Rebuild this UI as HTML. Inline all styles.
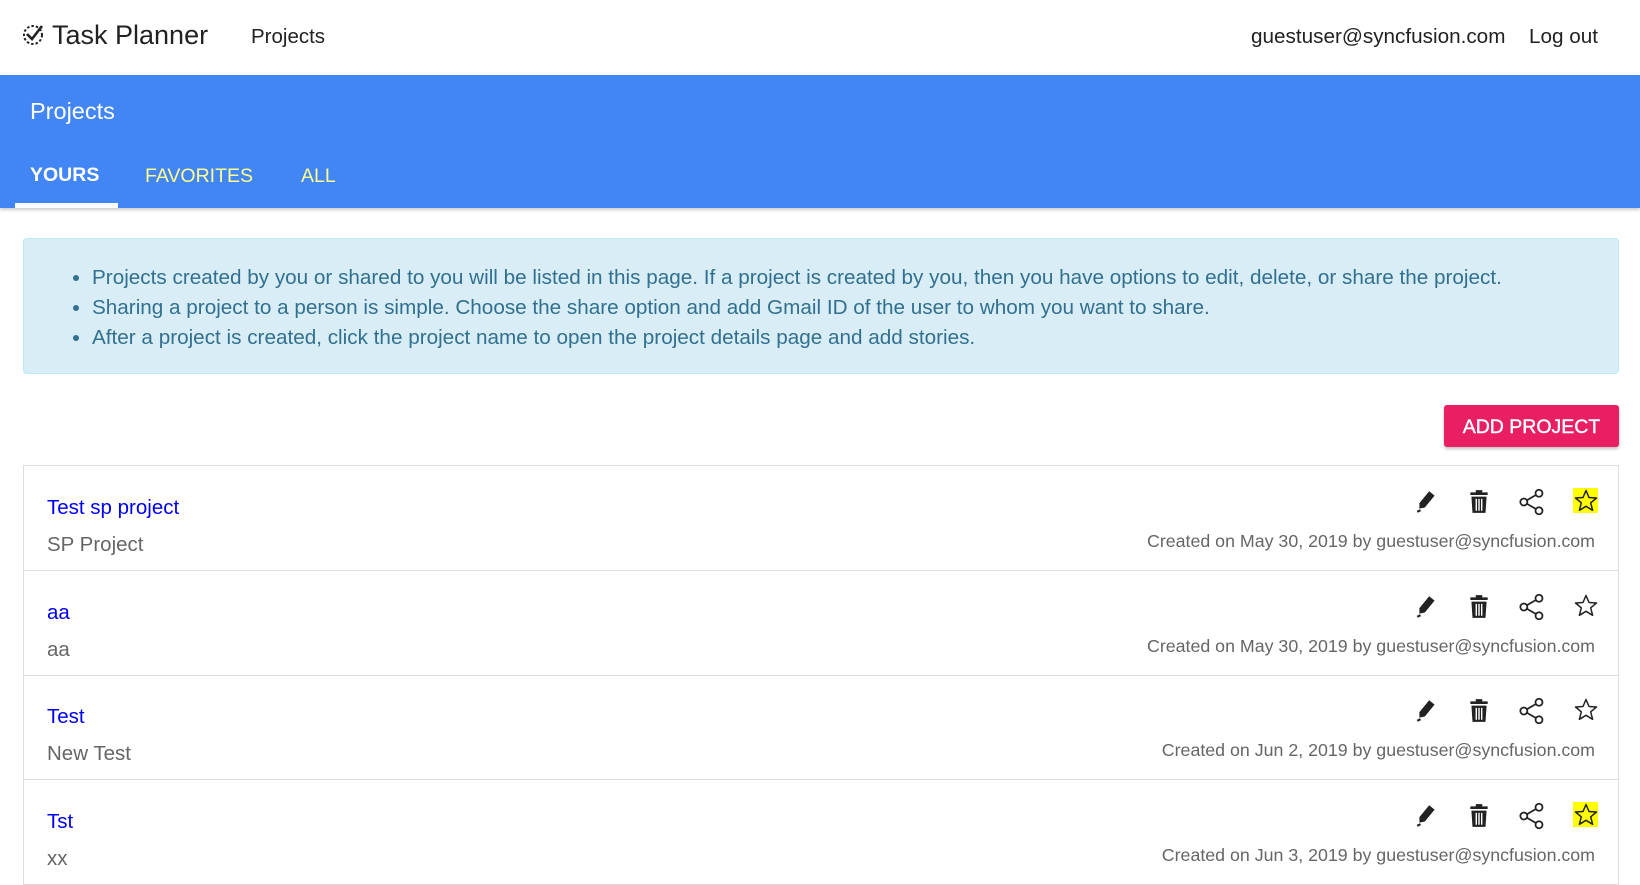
<!DOCTYPE html>
<html><head><style>
*{margin:0;padding:0;box-sizing:border-box}
body{width:1640px;height:860px;overflow:hidden;background:#fff;font-family:"Liberation Sans",sans-serif;position:relative}
.a{position:absolute;white-space:nowrap}
.hdr{color:#222}
.blue{position:absolute;left:0;top:75px;width:1640px;height:133px;background:#4285f4;box-shadow:0 2px 3px rgba(0,0,0,.2)}
.tab{position:absolute;font-size:19.5px;color:#ffff8d;top:164px}
.info{position:absolute;left:23px;top:238px;width:1596px;height:136px;background:#d9edf7;border:1px solid #bce8f1;border-radius:4px;color:#31708f;font-size:20.7px}
.info ul{margin:24px 0 0 68px}
.info li{line-height:30px}
.btn{position:absolute;left:1444px;top:405px;width:175px;height:42px;background:#e91e63;color:#fff;font-size:19.5px;text-align:center;line-height:45px;border-radius:3px;box-shadow:0 2px 3px rgba(0,0,0,.25);-webkit-text-stroke:0.4px #fff}
.list{position:absolute;left:23px;top:465px;width:1596px;height:420px;border:1px solid #ddd;border-bottom:none}
.row{position:absolute;left:0;width:1594px;height:105px;border-bottom:1px solid #ddd}
.t{position:absolute;left:23px;top:30px;font-size:20.5px;color:#0000ee}
.s{position:absolute;left:23px;top:67px;font-size:20.5px;color:#666}
.c{position:absolute;right:23px;top:65px;font-size:17.8px;color:#666}
.ic{position:absolute;top:22px}
</style></head><body>
<svg class="a" style="left:22px;top:23px" width="24" height="24" viewBox="0 0 24 24"><circle cx="11" cy="12" r="9" fill="none" stroke="#222" stroke-width="2" stroke-dasharray="2.5 2"/><path d="M5 11l5 5L20 3" fill="none" stroke="#222" stroke-width="2.6"/></svg>
<div class="a hdr" style="left:52px;top:20px;font-size:27px">Task Planner</div>
<div class="a hdr" style="left:251px;top:25px;font-size:20.5px">Projects</div>
<div class="a hdr" style="left:1251px;top:25px;font-size:20.7px">guestuser@syncfusion.com</div>
<div class="a hdr" style="left:1529px;top:25px;font-size:20.7px">Log out</div>
<div class="blue">
<div class="a" style="left:30px;top:23px;font-size:23.5px;color:#fff">Projects</div>
<div class="tab" style="left:30px;top:89px;color:#fff;font-weight:bold">YOURS</div>
<div class="tab" style="left:145px;top:90px">FAVORITES</div>
<div class="tab" style="left:301px;top:90px">ALL</div>
<div class="a" style="left:15px;top:128px;width:103px;height:5px;background:#fff"></div>
</div>
<div class="info"><ul>
<li>Projects created by you or shared to you will be listed in this page. If a project is created by you, then you have options to edit, delete, or share the project.</li>
<li>Sharing a project to a person is simple. Choose the share option and add Gmail ID of the user to whom you want to share.</li>
<li>After a project is created, click the project name to open the project details page and add stories.</li>
</ul></div>
<div class="btn">ADD PROJECT</div>
<div class="list"></div>
<script>
var rows=[["Test sp project","SP Project","May 30, 2019",1],["aa","aa","May 30, 2019",0],["Test","New Test","Jun 2, 2019",0],["Tst","xx","Jun 3, 2019",1]];
var h='';
rows.forEach(function(r,i){
h+='<div class="row" style="top:'+(i*104.6)+'px"><div class="t">'+r[0]+'</div><div class="s">'+r[1]+'</div><div class="c">Created on '+r[2]+' by guestuser@syncfusion.com</div>'+
'<svg class="ic" style="left:1390px" width="26" height="26" viewBox="0 0 24 24"><path d="M14 3l5 4-9 11-5 1 0-5z" fill="#222"/><path d="M3 22l3-1.5" stroke="#222" stroke-width="2"/></svg>'+
'<svg class="ic" style="left:1442px" width="26" height="26" viewBox="0 0 24 24"><path d="M4 4h16v2.5H4zM9 2h6v2H9zM5 8h14l-1 15H6z" fill="#222"/><path d="M9.5 10v11M12 10v11M14.5 10v11" stroke="#fff" stroke-width="1.3"/></svg>'+
'<svg class="ic" style="left:1494px" width="28" height="28" viewBox="0 0 24 24" fill="none" stroke="#222" stroke-width="1.5"><circle cx="18" cy="4.5" r="3"/><circle cx="18" cy="19.5" r="3"/><circle cx="5" cy="12" r="3"/><path d="M7.6 10.5l7.8-4.5M7.6 13.5l7.8 4.5"/></svg>'+
'<svg class="ic" style="left:1549px" width="26" height="26" viewBox="0 0 26 26">'+(r[3]?'<rect x="0" y="0" width="25" height="25" fill="#ffff00"/>':'')+'<path d="M13 2.5l3 7 7.5.5-5.8 4.8 1.9 7.5L13 18.3 6.4 22.3l1.9-7.5L2.5 10l7.5-.5z" fill="none" stroke="#222" stroke-width="1.5" stroke-linejoin="round"/></svg></div>';
});
document.querySelector('.list').innerHTML=h;
</script>
</body></html>
